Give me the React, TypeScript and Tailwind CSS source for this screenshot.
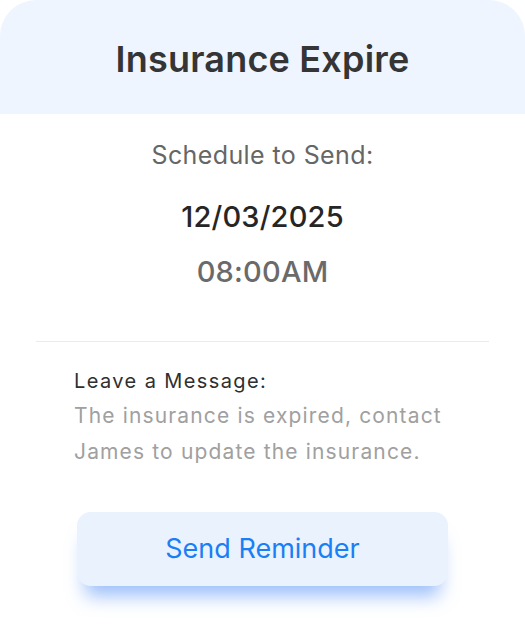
import React from 'react';

const ReminderCard: React.FC = () => {
  return (
    <div className="w-[525px] h-[639px] bg-white" style={{ fontFamily: 'Inter, "Noto Sans", sans-serif' }}>
      <div className="h-[114px] bg-[#eff5fe] rounded-t-[36px] flex items-center justify-center">
        <h1 className="text-[36px] font-semibold text-[#353535] tracking-[0.2px] pt-[4px] leading-[44px]">Insurance Expire</h1>
      </div>

      <div className="flex flex-col items-center pt-[26px]">
        <p className="text-[25px] text-[#666666] leading-[30px] tracking-[0.4px]">Schedule to Send:</p>
        <p className="mt-[30px] text-[29px] font-medium text-[#262626] leading-[34px] tracking-[0.2px]">12/03/2025</p>
        <p className="mt-[21px] text-[29px] font-medium text-[#6a6a6a] leading-[34px] tracking-[0.2px]">08:00AM</p>
      </div>

      <div className="mx-[36px] mt-[52px] h-px bg-[#ebebeb]" />

      <div className="px-[74px] pt-[24px]">
        <p className="text-[20px] text-[#2f2f2f] leading-[30px] tracking-[1.4px]">Leave a Message:</p>
        <p className="text-[21px] text-[#a0a0a0] leading-[36px] mt-[2px] tracking-[1.15px] whitespace-nowrap">
          The insurance is expired, contact
          <br />
          James to update the insurance.
        </p>
      </div>

      <div className="px-[77px] mt-[42px]">
        <button className="w-[371px] h-[74px] rounded-[14px] bg-[#eaf2fe] text-[27px] text-[#1a7ff5] shadow-[0_18px_18px_-8px_rgba(59,130,246,0.5)]">
          Send Reminder
        </button>
      </div>
    </div>
  );
};

export default function App() {
  return <ReminderCard />;
}
